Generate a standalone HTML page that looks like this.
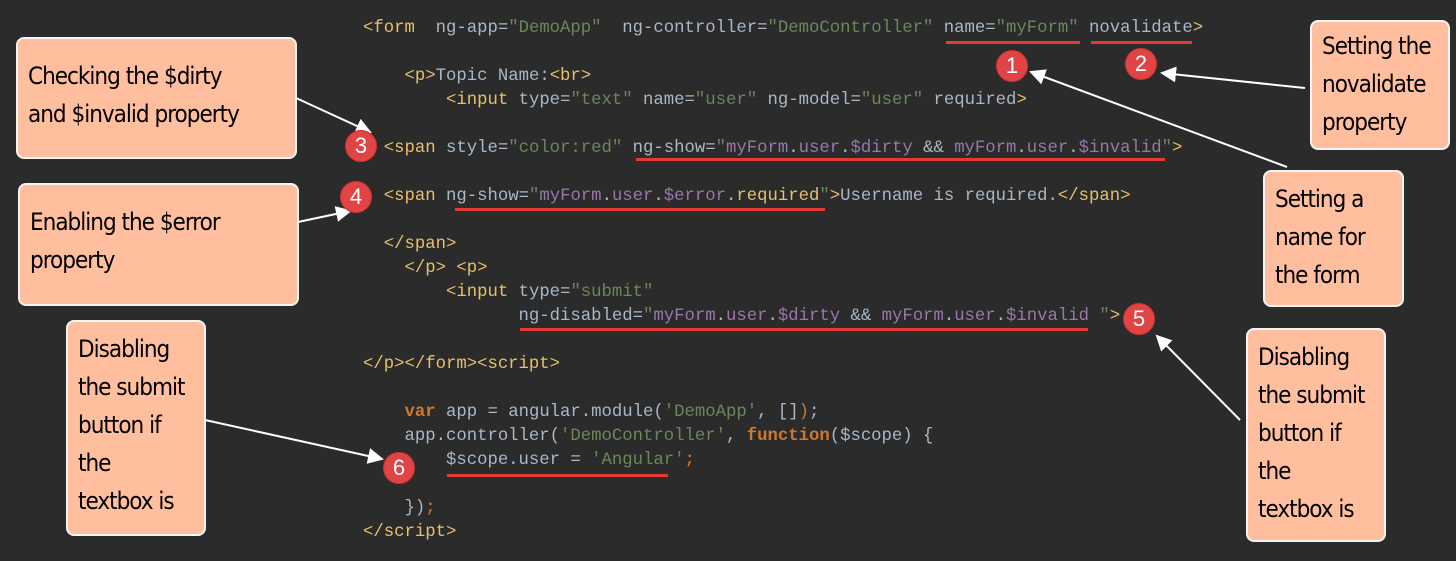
<!DOCTYPE html>
<html><head><meta charset="utf-8"><style>
body{margin:0;width:1456px;height:561px;background:#2b2b2b;position:relative;overflow:hidden}
.code{position:absolute;left:363px;top:17px;font-family:"Liberation Mono",monospace;font-size:17.3px;line-height:24px;color:#a9b7c6;white-space:pre;margin:0}
.t{color:#e8bf6a}.s{color:#6a8759}.p{color:#9876aa}.k{color:#cc7832;font-weight:bold}.o{color:#cc7832}
.box{position:absolute;background:#ffbf9f;border:2px solid #f4f4f4;border-radius:8px;box-sizing:border-box;font-family:"DejaVu Sans Condensed","DejaVu Sans",sans-serif;font-size:24px;line-height:38px;color:#000;padding:18px 10px 0 10px;letter-spacing:-1px}
.b{position:absolute;width:30px;height:30px;border-radius:50%;background:#e04444;color:#fff;font-family:"Liberation Sans",sans-serif;font-size:22px;text-align:center;line-height:30px;border:1px solid #c33}
.u{position:absolute;height:3px;background:#e53935}
</style></head><body>
<pre class="code"><span class="t">&lt;form</span>  ng-app=<span class="s">"DemoApp"</span>  ng-controller=<span class="s">"DemoController"</span> name=<span class="s">"myForm"</span> novalidate<span class="t">&gt;</span>

    <span class="t">&lt;p&gt;</span>Topic Name:<span class="t">&lt;br&gt;</span>
        <span class="t">&lt;input</span> type=<span class="s">"text"</span> name=<span class="s">"user"</span> ng-model=<span class="s">"user"</span> required<span class="t">&gt;</span>

  <span class="t">&lt;span</span> style=<span class="s">"color:red"</span> ng-show=<span class="s">"</span><span class="p">myForm</span>.<span class="p">user</span>.<span class="p">$dirty</span> &amp;&amp; <span class="p">myForm</span>.<span class="p">user</span>.<span class="p">$invalid</span><span class="s">"</span><span class="t">&gt;</span>

  <span class="t">&lt;span</span> ng-show=<span class="s">"</span><span class="p">myForm</span>.<span class="p">user</span>.<span class="p">$error</span>.<span class="t">required</span><span class="s">"</span><span class="t">&gt;</span>Username is required.<span class="t">&lt;/span&gt;</span>

  <span class="t">&lt;/span&gt;</span>
    <span class="t">&lt;/p&gt;</span> <span class="t">&lt;p&gt;</span>
        <span class="t">&lt;input</span> type=<span class="s">"submit"</span>
               ng-disabled=<span class="s">"</span><span class="p">myForm</span>.<span class="p">user</span>.<span class="p">$dirty</span> &amp;&amp; <span class="p">myForm</span>.<span class="p">user</span>.<span class="p">$invalid</span> <span class="s">"</span><span class="t">&gt;</span>

<span class="t">&lt;/p&gt;&lt;/form&gt;&lt;script&gt;</span>

    <span class="k">var</span> app = angular.module(<span class="s">'DemoApp'</span>, []<span class="o">)</span>;
    app.controller(<span class="s">'DemoController'</span>, <span class="k">function</span>($scope) {
        $scope.user = <span class="s">'Angular'</span><span class="o">;</span>

    })<span class="o">;</span>
<span class="t">&lt;/script&gt;</span></pre>
<div class="u" style="left:946px;top:41px;width:134px"></div>
<div class="u" style="left:1091px;top:41px;width:101px"></div>
<div class="u" style="left:636px;top:158px;width:529px"></div>
<div class="u" style="left:455px;top:208px;width:370px"></div>
<div class="u" style="left:520px;top:328px;width:568px"></div>
<div class="u" style="left:447px;top:474px;width:221px"></div>
<svg width="1456" height="561" style="position:absolute;left:0;top:0">
<defs><marker id="a" markerWidth="8" markerHeight="8" refX="7" refY="4" orient="auto"><path d="M0,0 L8,4 L0,8 z" fill="#fff"/></marker></defs>
<g stroke="#fff" stroke-width="2" marker-end="url(#a)">
<line x1="296" y1="98" x2="370" y2="132"/>
<line x1="298" y1="222" x2="350" y2="211"/>
<line x1="205" y1="420" x2="382" y2="459"/>
<line x1="1305" y1="88" x2="1162" y2="73"/>
<line x1="1287" y1="167" x2="1031" y2="72"/>
<line x1="1240" y1="420" x2="1157" y2="336"/>
</g></svg>
<div class="b" style="left:996px;top:50px">1</div>
<div class="b" style="left:1125px;top:48px">2</div>
<div class="b" style="left:345px;top:130px">3</div>
<div class="b" style="left:340px;top:181px">4</div>
<div class="b" style="left:1123px;top:303px">5</div>
<div class="b" style="left:383px;top:452px">6</div>
<div class="box" style="left:16px;top:37px;width:281px;height:122px">Checking the $dirty<br>and $invalid property</div>
<div class="box" style="left:18px;top:183px;width:281px;height:123px">Enabling the $error<br>property</div>
<div class="box" style="left:66px;top:320px;width:140px;height:216px;padding-top:8px">Disabling<br>the submit<br>button if<br>the<br>textbox is</div>
<div class="box" style="left:1310px;top:20px;width:140px;height:130px;padding-top:5px">Setting the<br>novalidate<br>property</div>
<div class="box" style="left:1263px;top:170px;width:141px;height:137px;padding-top:8px">Setting a<br>name for<br>the form</div>
<div class="box" style="left:1246px;top:328px;width:140px;height:214px;padding-top:8px">Disabling<br>the submit<br>button if<br>the<br>textbox is</div>
</body></html>
